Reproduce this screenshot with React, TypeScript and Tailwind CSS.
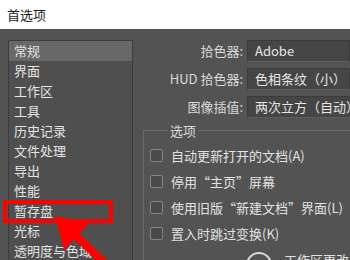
import React from 'react';

const FONT = { fontFamily: '"Noto Sans CJK SC", "Noto Sans", sans-serif' };

const categories = [
	'常规',
	'界面',
	'工作区',
	'工具',
	'历史记录',
	'文件处理',
	'导出',
	'性能',
	'暂存盘',
	'光标',
	'透明度与色域',
	'单位与标尺',
];

const selects = [
	{ label: '拾色器:', value: 'Adobe' },
	{ label: 'HUD 拾色器:', value: '色相条纹（小）' },
	{ label: '图像插值:', value: '两次立方（自动）' },
];

const options = [
	'自动更新打开的文档(A)',
	'停用“主页”屏幕',
	'使用旧版“新建文档”界面(L)',
	'置入时跳过变换(K)',
];

// Sidebar list of preference pages
function CategoryList() {
	return (
		<div className="ml-[8px] mt-[11px] w-[125px] shrink-0 self-start border border-[#3c3c3c] bg-[#4f4f4f]">
			{categories.map((c, i) => (
				<div
					key={c}
					className={`h-[20px] pl-[5px] text-[13px] leading-[20px] text-[#e4e4e4] ${i === 0 ? 'bg-[#686868]' : ''}`}>
					{c}
				</div>
			))}
		</div>
	);
}

export default function App() {
	return (
		<div className="relative h-[260px] w-[350px] overflow-hidden" style={FONT}>
			{/* Window title */}
			<div className="flex h-[29px] items-center bg-white pl-[7px] text-[13px] text-[#1a1a1a]">首选项</div>

			<div className="flex h-[231px] bg-[#535353]">
				<CategoryList />

				<div className="flex min-w-0 flex-1 flex-col pt-[11px]">
					{/* Picker / interpolation rows */}
					<div className="flex flex-col gap-[6px]">
						{selects.map((s) => (
							<div key={s.label} className="flex h-[22px] items-center">
								<span className="w-[110px] shrink-0 text-right text-[13px] text-[#dadada]">{s.label}</span>
								<div className="ml-[4px] flex h-[22px] flex-1 items-center whitespace-nowrap border border-[#3b3b3b] border-b-[#5c5c5c] bg-[#454545] pl-[7px] text-[13px] text-[#e6e6e6]">
									{s.value}
								</div>
							</div>
						))}
					</div>

					{/* Options group */}
					<fieldset className="ml-[10px] mt-[5px] border border-r-0 border-[#6a6a6a] pl-[6px]">
						<legend className="ml-[18px] px-[2px] text-[13px] leading-[15px] text-[#dadada]">选项</legend>
						<div className="mt-[11px] flex flex-col gap-[13px]">
							{options.map((o) => (
								<div key={o} className="flex h-[13px] items-center whitespace-nowrap">
									<span className="h-[13px] w-[13px] shrink-0 rounded-[2px] border border-[#858585] bg-[#4a4a4a]" />
									<span className="ml-[8px] text-[13px] text-[#e2e2e2]">{o}</span>
								</div>
							))}
						</div>
						<div className="ml-[96px] mt-[12px] flex items-start whitespace-nowrap">
							<span className="h-[26px] w-[26px] shrink-0 rounded-full border-2 border-[#d8d8d8]" />
							<span className="ml-[12px] -mt-[2px] text-[13px] text-[#e2e2e2]">工作区更改</span>
						</div>
					</fieldset>
				</div>
			</div>

			{/* Red annotation highlight */}
			<div className="absolute left-[3px] top-[200px] h-[23px] w-[110px] border-[4px] border-[#ff0000]" />
			<svg className="absolute left-0 top-0" width="350" height="260" viewBox="0 0 350 260">
				<line x1="70" y1="230" x2="112" y2="270" stroke="#ff0000" strokeWidth="8" />
				<polygon points="55,216 90,222 64,250" fill="#ff0000" />
			</svg>
		</div>
	);
}
